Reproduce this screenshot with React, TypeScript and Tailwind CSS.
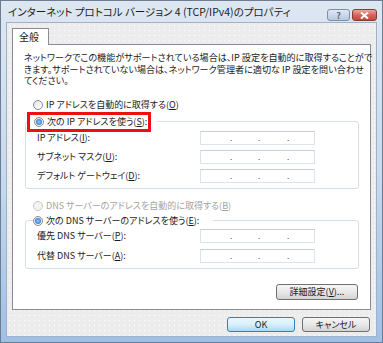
import type { ReactNode } from 'react';

const FONT = "font-['Noto_Sans_CJK_JP','Noto_Sans',sans-serif] [font-feature-settings:'palt']";

function Radio({ checked = false, disabled = false }: { checked?: boolean; disabled?: boolean }) {
  return (
    <span
      className={`flex h-[10px] w-[10px] shrink-0 items-center justify-center rounded-full border ${
        disabled ? 'border-[#c8c8c8] bg-[#f4f4f4]' : 'border-[#8a8a8a] bg-linear-to-br from-[#e4e4e4] to-white'
      }`}
    >
      {checked && (
        <span className="h-[6px] w-[6px] rounded-full bg-radial from-[#8ad0ff] to-[#1a5cb8]" />
      )}
    </span>
  );
}

function RadioRow({ children, checked, disabled }: { children: ReactNode; checked?: boolean; disabled?: boolean }) {
  return (
    <div className={`flex h-[12px] items-center gap-[3px] whitespace-nowrap ${disabled ? 'text-[#a3a3a3]' : 'text-[#1a1a1a]'}`}>
      <Radio checked={checked} disabled={disabled} />
      <span className="leading-none">{children}</span>
    </div>
  );
}

function IpField() {
  return (
    <div className="flex h-[14px] w-[115px] items-center border border-[#dde3ea] border-t-[#c9ced5] bg-white pl-[29px] text-[8px] leading-none text-[#444]">
      <span className="w-[28px]">.</span>
      <span className="w-[29px]">.</span>
      <span>.</span>
    </div>
  );
}

function FieldRow({ label, className = '' }: { label: ReactNode; className?: string }) {
  return (
    <div className={`flex h-[14px] items-center ${className}`}>
      <span className="w-[163px] whitespace-nowrap leading-none text-[#1a1a1a]">{label}</span>
      <IpField />
    </div>
  );
}

function Button({ children, primary = false, className = '' }: { children: ReactNode; primary?: boolean; className?: string }) {
  return (
    <div
      className={`flex items-center justify-center whitespace-nowrap rounded-[3px] border leading-none text-[#1a1a1a] ${
        primary
          ? 'border-[#3c7fb1] bg-linear-to-b from-[#eaf6fd] via-[#d9f0fc] to-[#a7d9f5]'
          : 'border-[#707070] bg-linear-to-b from-[#f6f6f6] via-[#e8e8e8] to-[#d3d3d3]'
      } ${className}`}
    >
      {children}
    </div>
  );
}

export default function App() {
  return (
    <div className={`${FONT} flex h-[343px] w-[383px] flex-col border border-[#6c7d92] bg-linear-to-b from-[#dde7f2] via-[#c8daee] to-[#9fc0e6] text-[9px]`}>
      {/* title bar */}
      <div className="flex h-[21px] shrink-0 items-start">
        <span className="mt-[6px] ml-[7px] whitespace-nowrap text-[10.5px] leading-none text-[#1e1e1e]">
          インターネット プロトコル バージョン 4 (TCP/IPv4)のプロパティ
        </span>
        <div className="mt-[8px] mr-[5px] ml-auto flex gap-[2px]">
          <div className="flex h-[12px] w-[23px] items-center justify-center rounded-[3px] border border-[#7f8ea4] bg-linear-to-b from-[#dfe8f3] to-[#b7c9df] text-[9px] font-bold leading-none text-[#5a6a80]">
            ?
          </div>
          <div className="flex h-[12px] w-[25px] items-center justify-center rounded-[3px] border border-[#8a3a36] bg-linear-to-b from-[#e9a89c] via-[#d4675a] to-[#c24a3c]">
            <svg width="9" height="7" viewBox="0 0 9 7">
              <path d="M1 0.5 L8 6.5 M8 0.5 L1 6.5" stroke="#fff" strokeWidth="2" />
            </svg>
          </div>
        </div>
      </div>

      {/* client area */}
      <div className="mx-[5px] flex flex-1 flex-col border border-[#9fb2c8] bg-[#ececec] bg-[radial-gradient(#ffffff_0.6px,transparent_0.8px)] bg-size-[5px_5px]">
        {/* tab */}
        <div className="mt-[5px] ml-[5px] flex">
          <div className="relative z-10 -mb-px flex h-[17px] w-[37px] items-center border border-b-0 border-[#898c95] bg-white pl-[6px] text-[10px] leading-none text-[#1a1a1a]">
            全般
          </div>
        </div>

        {/* panel */}
        <div className="mx-[5px] flex h-[266px] shrink-0 flex-col border border-[#898c95] bg-white pl-[11px]">
          <p className="mt-[7px] whitespace-nowrap text-[9.1px] leading-[11.5px] text-[#1a1a1a]">
            ネットワークでこの機能がサポートされている場合は、IP 設定を自動的に取得することがで
            <br />
            きます。サポートされていない場合は、ネットワーク管理者に適切な IP 設定を問い合わせ
            <br />
            てください。
          </p>

          <div className="mr-[11px] flex flex-col pl-px">
            <div className="mt-[12px] ml-[8px]">
              <RadioRow>
                IP アドレスを自動的に取得する(<u>O</u>)
              </RadioRow>
            </div>

            {/* static IP group */}
            <div className="mt-[10px] h-[68px] rounded-[3px] border border-[#d5dfe5] pl-[11px]">
              <div className="-mt-[10px] -ml-[10px] w-fit bg-white pr-[6px]">
                <div className="flex h-[20px] w-[124px] items-center border-[3px] border-[#ee1010] pl-[4px]">
                  <RadioRow checked>
                    次の IP アドレスを使う(<u>S</u>):
                  </RadioRow>
                </div>
              </div>
              <FieldRow className="mt-[-1px]" label={<>IP アドレス(<u>I</u>):</>} />
              <FieldRow className="mt-[5px]" label={<>サブネット マスク(<u>U</u>):</>} />
              <FieldRow className="mt-[5px]" label={<>デフォルト ゲートウェイ(<u>D</u>):</>} />
            </div>

            <div className="mt-[11px] ml-[8px]">
              <RadioRow disabled>
                DNS サーバーのアドレスを自動的に取得する(<u>B</u>)
              </RadioRow>
            </div>

            {/* DNS group */}
            <div className="mt-[8px] h-[49px] rounded-[3px] border border-[#d5dfe5] pl-[11px]">
              <div className="-mt-[7px] -ml-[4px] flex h-[14px] w-fit items-center bg-white pr-[14px]">
                <RadioRow checked>
                  次の DNS サーバーのアドレスを使う(<u>E</u>):
                </RadioRow>
              </div>
              <FieldRow className="mt-[1px]" label={<>優先 DNS サーバー(<u>P</u>):</>} />
              <FieldRow className="mt-[6px]" label={<>代替 DNS サーバー(<u>A</u>):</>} />
            </div>

            <div className="mt-[15px] flex justify-end pr-px">
              <Button className="h-[16px] w-[82px]">
                詳細設定(<u>V</u>)...
              </Button>
            </div>
          </div>
        </div>

        {/* dialog buttons */}
        <div className="mt-[7px] mr-[6px] flex justify-end gap-[7px]">
          <Button primary className="h-[15px] w-[68px]">
            OK
          </Button>
          <Button className="h-[15px] w-[68px]">キャンセル</Button>
        </div>
      </div>
      <div className="h-[5px] shrink-0" />
    </div>
  );
}
